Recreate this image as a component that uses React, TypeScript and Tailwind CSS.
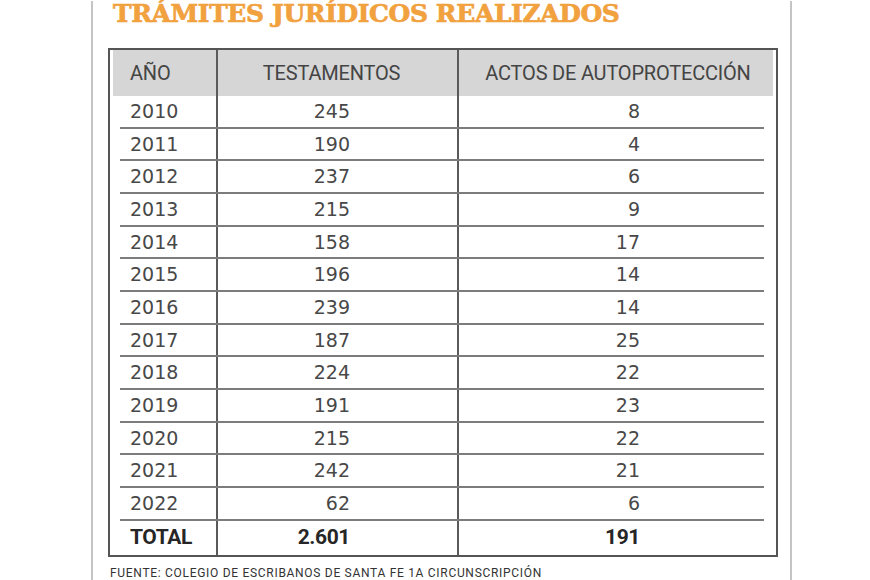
const rows: [string, string, string][] = [
  ['2010', '245', '8'],
  ['2011', '190', '4'],
  ['2012', '237', '6'],
  ['2013', '215', '9'],
  ['2014', '158', '17'],
  ['2015', '196', '14'],
  ['2016', '239', '14'],
  ['2017', '187', '25'],
  ['2018', '224', '22'],
  ['2019', '191', '23'],
  ['2020', '215', '22'],
  ['2021', '242', '21'],
  ['2022', '62', '6'],
];

const digits = {fontFamily: '"DejaVu Sans", sans-serif'};
const cond = {fontFamily: 'Roboto, "Liberation Sans", sans-serif'};

export default function App() {
  return (
    <div className="w-[870px] h-[580px] overflow-hidden bg-white">
      <div className="ml-[91px] w-[701px] h-full border-x-2 border-[#c4c4c4] pl-[15px] pr-[12px]">
        <h1
          className="mt-[1px] ml-[5px] text-[25px] leading-[25px] font-bold text-[#f1a13e] tracking-[-0.4px] whitespace-nowrap [-webkit-text-stroke:0.7px_#f1a13e]"
          style={{fontFamily: '"DejaVu Serif", serif'}}
        >
          TRÁMITES JURÍDICOS REALIZADOS
        </h1>

        <div className="mt-[22px] border-2 border-[#555] px-[3px]">
          {/* header */}
          <div className="grid grid-cols-[105px_241px_1fr] h-[46px] bg-[#d6d6d6] text-[20px] text-[#444] tracking-[-0.2px]" style={cond}>
            <div className="flex items-center pl-[17px] border-r-2 border-[#5a5a5a]">AÑO</div>
            <div className="flex items-center justify-center pr-[12px] border-r-2 border-[#5a5a5a]">TESTAMENTOS</div>
            <div className="flex items-center justify-center pl-[4px]">ACTOS DE AUTOPROTECCIÓN</div>
          </div>

          {rows.map(([y, t, a]) => (
            <div key={y}>
              <div className="grid grid-cols-[105px_241px_1fr] h-[30.67px] text-[19px] text-[#484848]" style={digits}>
                <div className="flex items-center pl-[17px] border-r-2 border-[#5a5a5a]">{y}</div>
                <div className="flex items-center justify-end pr-[107px] border-r-2 border-[#5a5a5a]">{t}</div>
                <div className="flex items-center justify-end pr-[133px]">{a}</div>
              </div>
              <div className="ml-[7px] mr-[9px] h-[2px] bg-[#7c7c7c]" />
            </div>
          ))}

          {/* total */}
          <div className="grid grid-cols-[105px_241px_1fr] h-[34px] text-[21px] font-bold text-[#262626] tracking-[-0.4px]" style={cond}>
            <div className="flex items-center pl-[17px] border-r-2 border-[#5a5a5a]">TOTAL</div>
            <div className="flex items-center justify-end pr-[107px] border-r-2 border-[#5a5a5a]">2.601</div>
            <div className="flex items-center justify-end pr-[133px]">191</div>
          </div>
        </div>

        <p className="mt-[11px] ml-[2px] text-[12px] leading-[11px] text-[#333] tracking-[0.7px] whitespace-nowrap" style={cond}>
          FUENTE: COLEGIO DE ESCRIBANOS DE SANTA FE 1A CIRCUNSCRIPCIÓN
        </p>
      </div>
    </div>
  );
}
